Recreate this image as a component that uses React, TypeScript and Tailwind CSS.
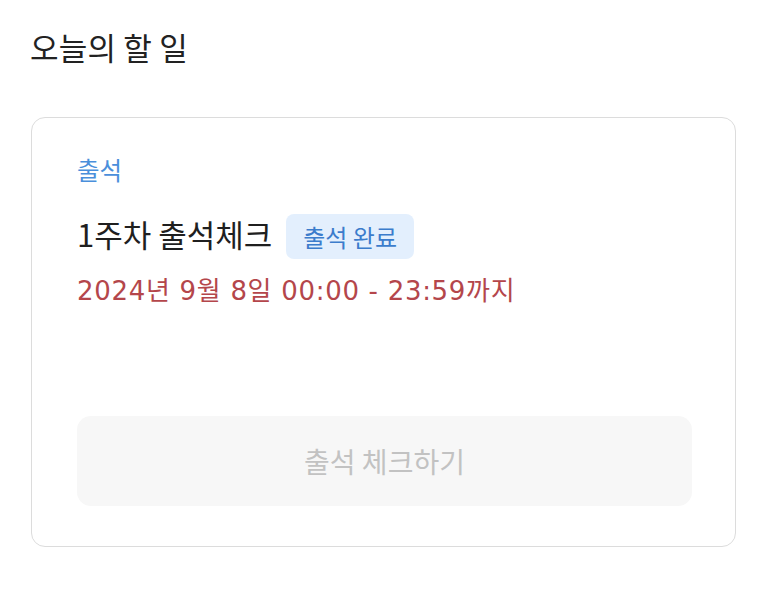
import React from "react";

export default function App() {
  return (
    <div
      className="w-[760px] h-[602px] bg-white pl-[31px] pt-[27px]"
      style={{ fontFamily: '"Noto Sans CJK KR", "Noto Sans", sans-serif' }}
    >
      <h1 className="text-[31px] leading-[40px] text-[#222222] font-normal -ml-[1px] tracking-[0.2px]">
        오늘의 할 일
      </h1>
      <div className="mt-[50px] w-[705px] h-[430px] border border-[#dcdcdc] rounded-[14px] pl-[45px] pr-[42px] pt-[36px] flex flex-col">
        <div className="text-[24.5px] leading-[31px] text-[#4a8fdb]">출석</div>
        <div className="mt-[29px] flex items-center h-[45px]">
          <span className="text-[31px] leading-[38px] text-[#1f1f1f] -mt-[6px]">1주차 출석체크</span>
          <span className="ml-[14px] h-[45px] px-[17px] rounded-[8px] bg-[#e3effd] text-[24px] leading-[45px] text-[#3b7ccc]">
            출석 완료
          </span>
        </div>
        <div
          className="mt-[16px] text-[26px] leading-[33px] text-[#b4464b] tracking-[0.7px]"
          style={{ fontFamily: '"DejaVu Sans", "Noto Sans CJK KR", sans-serif' }}
        >
          2024년 9월 8일 00:00 - 23:59까지
        </div>
        <button className="mt-[108px] w-[615px] h-[90px] rounded-[14px] bg-[#f7f7f7] text-[28px] text-[#c2c2c2]">
          출석 체크하기
        </button>
      </div>
    </div>
  );
}
